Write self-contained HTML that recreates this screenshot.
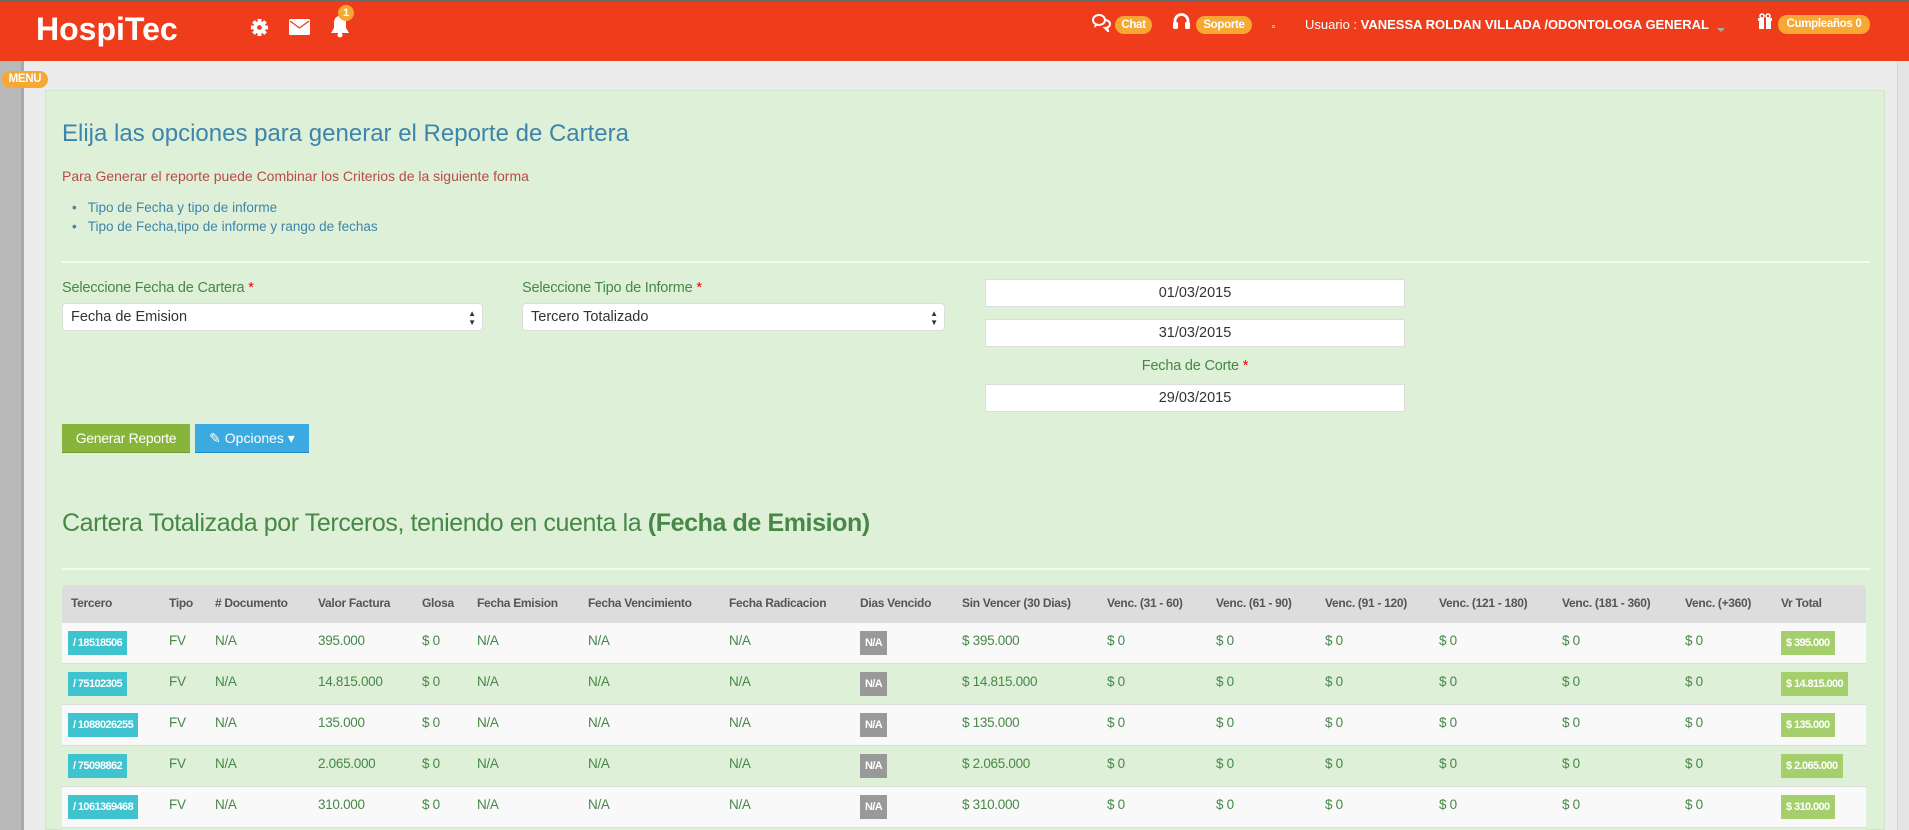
<!DOCTYPE html>
<html style="overflow:hidden;width:1909px;height:830px"><head><meta charset="utf-8"><style>
*{margin:0;padding:0;box-sizing:border-box}
body{width:1909px;height:830px;overflow:hidden;background:#ececec;font-family:"Liberation Sans",Arial,sans-serif;position:relative}
.a{position:absolute;white-space:nowrap}
.hdr{left:0;top:0;width:1909px;height:61px;background:#ef3d1c;border-top:2px solid #6b6b6b}
.pill{background:#f6a833;color:#fff;font-weight:bold;border-radius:9px;font-size:11.5px;height:18px;line-height:18px;padding:0 4px;text-align:center;letter-spacing:-0.3px}
.panel{left:45px;top:90px;width:1840px;height:740px;background:#dff0d8;border:1px solid #d0e6c6}
.lbl{color:#468847;font-size:14.5px;letter-spacing:-0.2px}
.sel{background:#fff;border:1px solid #ddd;border-radius:4px;height:28px;font-size:14.5px;color:#333;line-height:26px;padding-left:8px}
.inp{background:#fff;border:1px solid #ddd;height:28px;width:420px;font-size:14.5px;color:#333;line-height:26px;text-align:center}
.th{top:585px;height:37px;line-height:37px;font-size:12px;font-weight:bold;color:#555;letter-spacing:-0.3px}
.row{left:62px;width:1804px;height:41px;border-top:1px solid #ddd}
.td{font-size:13.5px;color:#468847;letter-spacing:-0.3px}
.bd{color:#fff;font-weight:bold;font-size:11px;height:24px;line-height:24px;padding:0 5px;letter-spacing:-0.6px}
</style></head><body>
<div class="a hdr"></div>
<div class="a" style="left:36px;top:11px;font-size:32px;font-weight:bold;color:#fff;letter-spacing:0px">HospiTec</div>
<svg class="a" style="left:250px;top:18px" width="19" height="19" viewBox="0 0 20 20"><g fill="#fff"><circle cx="10" cy="10" r="6.5"/><rect x="8" y="1" width="4" height="18"/><rect x="1" y="8" width="18" height="4"/><rect x="8" y="1" width="4" height="18" transform="rotate(45 10 10)"/><rect x="8" y="1" width="4" height="18" transform="rotate(-45 10 10)"/></g><circle cx="10" cy="10" r="2.5" fill="#ef3d1c"/></svg>
<svg class="a" style="left:289px;top:19px" width="21" height="16" viewBox="0 0 21 16"><rect width="21" height="16" rx="1.5" fill="#fff"/><path d="M1 2l9.5 7L20 2" stroke="#ef3d1c" stroke-width="1.3" fill="none"/></svg>
<svg class="a" style="left:329px;top:15px" width="22" height="23" viewBox="0 0 22 23"><path d="M11 1c-4 0-6 3-6 7v5l-3 5h18l-3-5V8c0-4-2-7-6-7z" fill="#fff"/><circle cx="11" cy="20" r="2.5" fill="#fff"/></svg>
<div class="a" style="left:338px;top:5px;width:16px;height:16px;border-radius:8px;background:#f6a833;color:#fff;font-size:11px;font-weight:bold;text-align:center;line-height:16px">1</div>
<svg class="a" style="left:1092px;top:13px" width="19" height="19" viewBox="0 0 19 19"><ellipse cx="7" cy="7" rx="6" ry="5" fill="none" stroke="#fff" stroke-width="2"/><path d="M3 11l-1 4 4-3" fill="#fff"/><path d="M13 7a5 4 0 0 1 0 8l3 3-1-4" fill="none" stroke="#fff" stroke-width="2"/></svg>
<div class="a pill" style="left:1115px;top:16px;width:37px">Chat</div>
<svg class="a" style="left:1172px;top:12px" width="19" height="19" viewBox="0 0 19 19"><path d="M3 12V9a6.5 6.5 0 0 1 13 0v3" fill="none" stroke="#fff" stroke-width="2.8"/><rect x="1" y="10" width="5" height="7" rx="1.5" fill="#fff"/><rect x="13" y="10" width="5" height="7" rx="1.5" fill="#fff"/></svg>
<div class="a pill" style="left:1196px;top:16px;width:56px">Soporte</div>
<div class="a" style="left:1272px;top:25px;width:3px;height:3px;border:1px solid #f6a833"></div>
<div class="a" style="left:1305px;top:17px;font-size:13px;color:#fff">Usuario : <b>VANESSA ROLDAN VILLADA /ODONTOLOGA GENERAL</b></div>
<div class="a" style="left:1717px;top:28px;border:4px solid transparent;border-top:4px solid #aaa"></div>
<svg class="a" style="left:1757px;top:13px" width="16" height="16" viewBox="0 0 16 16"><rect x="1" y="5" width="14" height="3" fill="#fff"/><rect x="2" y="8" width="12" height="8" fill="#fff"/><rect x="7" y="5" width="2" height="11" fill="#ef3d1c"/><circle cx="5" cy="3" r="2" fill="none" stroke="#fff" stroke-width="1.5"/><circle cx="11" cy="3" r="2" fill="none" stroke="#fff" stroke-width="1.5"/></svg>
<div class="a pill" style="left:1778px;top:15px;width:92px;height:19px">Cumpleaños 0</div>

<div class="a" style="left:0;top:61px;width:24px;height:769px;background:#b9b9b9;border-right:3px solid #a9a9a9"></div>
<div class="a" style="left:1897px;top:61px;width:12px;height:769px;background:#e4e4e4;border-left:1px solid #d5d5d5"></div>
<div class="a pill" style="left:2px;top:71px;width:46px;height:17px;line-height:17px;font-size:11.5px;padding:0">MENU</div>

<div class="a panel"></div>
<div class="a" style="left:62px;top:120px;font-size:24px;color:#3d85aa">Elija las opciones para generar el Reporte de Cartera</div>
<div class="a" style="left:62px;top:168px;font-size:14px;color:#b94a48">Para Generar el reporte puede Combinar los Criterios de la siguiente forma</div>
<div class="a" style="left:72px;top:198px;font-size:13.5px;color:#3d85aa;line-height:19px">•&nbsp;&nbsp; Tipo de Fecha y tipo de informe<br>•&nbsp;&nbsp; Tipo de Fecha,tipo de informe y rango de fechas</div>
<div class="a" style="left:62px;top:261px;width:1808px;height:2px;background:#f4f9f1"></div>

<div class="a lbl" style="left:62px;top:280px">Seleccione Fecha de Cartera <span style="color:#e00">*</span></div>
<div class="a lbl" style="left:522px;top:280px">Seleccione Tipo de Informe <span style="color:#e00">*</span></div>
<div class="a sel" style="left:62px;top:303px;width:421px">Fecha de Emision<span style="position:absolute;right:6px;top:0;font-size:8px;line-height:9px;padding-top:5px">▲<br>▼</span></div>
<div class="a sel" style="left:522px;top:303px;width:423px">Tercero Totalizado<span style="position:absolute;right:6px;top:0;font-size:8px;line-height:9px;padding-top:5px">▲<br>▼</span></div>
<div class="a inp" style="left:985px;top:279px">01/03/2015</div>
<div class="a inp" style="left:985px;top:319px">31/03/2015</div>
<div class="a lbl" style="left:985px;top:358px;width:420px;text-align:center">Fecha de Corte <span style="color:#e00">*</span></div>
<div class="a inp" style="left:985px;top:384px">29/03/2015</div>

<div class="a" style="left:62px;top:424px;width:128px;height:29px;background:#87b43a;color:#fff;font-size:14px;line-height:29px;text-align:center;border-bottom:1px solid #6d9a2a;letter-spacing:-0.3px">Generar Reporte</div>
<div class="a" style="left:195px;top:424px;width:114px;height:29px;background:#3aaae1;color:#fff;font-size:14px;line-height:29px;text-align:center;border-bottom:1px solid #1f8fc8">✎ Opciones ▾</div>

<div class="a" style="left:62px;top:509px;font-size:25px;color:#468847;letter-spacing:-0.4px">Cartera Totalizada por Terceros, teniendo en cuenta la <b>(Fecha de Emision)</b></div>
<div class="a" style="left:62px;top:568px;width:1808px;height:2px;background:#f4f9f1"></div>

<div class="a" style="left:62px;top:585px;width:1804px;height:37px;background:#dddddd;border-radius:4px 4px 0 0"></div>
<div class="a th" style="left:71px">Tercero</div>
<div class="a th" style="left:169px">Tipo</div>
<div class="a th" style="left:215px"># Documento</div>
<div class="a th" style="left:318px">Valor Factura</div>
<div class="a th" style="left:422px">Glosa</div>
<div class="a th" style="left:477px">Fecha Emision</div>
<div class="a th" style="left:588px">Fecha Vencimiento</div>
<div class="a th" style="left:729px">Fecha Radicacion</div>
<div class="a th" style="left:860px">Dias Vencido</div>
<div class="a th" style="left:962px">Sin Vencer (30 Dias)</div>
<div class="a th" style="left:1107px">Venc. (31 - 60)</div>
<div class="a th" style="left:1216px">Venc. (61 - 90)</div>
<div class="a th" style="left:1325px">Venc. (91 - 120)</div>
<div class="a th" style="left:1439px">Venc. (121 - 180)</div>
<div class="a th" style="left:1562px">Venc. (181 - 360)</div>
<div class="a th" style="left:1685px">Venc. (+360)</div>
<div class="a th" style="left:1781px">Vr Total</div>

<div class="a row" style="top:622px;background:#f9f9f9"></div>
<div class="a row" style="top:663px;background:#dff0d8"></div>
<div class="a row" style="top:704px;background:#f9f9f9"></div>
<div class="a row" style="top:745px;background:#dff0d8"></div>
<div class="a row" style="top:786px;background:#f9f9f9"></div>
<div class="a" style="left:62px;top:827px;width:1804px;height:3px;border-top:1px solid #ddd;background:#dff0d8"></div>

<div class="a bd" style="left:68px;top:631px;background:#3ec3cf">/ 18518506</div>
<div class="a bd" style="left:68px;top:672px;background:#3ec3cf">/ 75102305</div>
<div class="a bd" style="left:68px;top:713px;background:#3ec3cf">/ 1088026255</div>
<div class="a bd" style="left:68px;top:754px;background:#3ec3cf">/ 75098862</div>
<div class="a bd" style="left:68px;top:795px;background:#3ec3cf">/ 1061369468</div>

<div class="a td" style="left:169px;top:620px;line-height:41px">FV<br>FV<br>FV<br>FV<br>FV</div>
<div class="a td" style="left:215px;top:620px;line-height:41px">N/A<br>N/A<br>N/A<br>N/A<br>N/A</div>
<div class="a td" style="left:318px;top:620px;line-height:41px">395.000<br>14.815.000<br>135.000<br>2.065.000<br>310.000</div>
<div class="a td" style="left:422px;top:620px;line-height:41px">$ 0<br>$ 0<br>$ 0<br>$ 0<br>$ 0</div>
<div class="a td" style="left:477px;top:620px;line-height:41px">N/A<br>N/A<br>N/A<br>N/A<br>N/A</div>
<div class="a td" style="left:588px;top:620px;line-height:41px">N/A<br>N/A<br>N/A<br>N/A<br>N/A</div>
<div class="a td" style="left:729px;top:620px;line-height:41px">N/A<br>N/A<br>N/A<br>N/A<br>N/A</div>
<div class="a bd" style="left:860px;top:631px;background:#999">N/A</div>
<div class="a bd" style="left:860px;top:672px;background:#999">N/A</div>
<div class="a bd" style="left:860px;top:713px;background:#999">N/A</div>
<div class="a bd" style="left:860px;top:754px;background:#999">N/A</div>
<div class="a bd" style="left:860px;top:795px;background:#999">N/A</div>
<div class="a td" style="left:962px;top:620px;line-height:41px">$ 395.000<br>$ 14.815.000<br>$ 135.000<br>$ 2.065.000<br>$ 310.000</div>
<div class="a td" style="left:1107px;top:620px;line-height:41px">$ 0<br>$ 0<br>$ 0<br>$ 0<br>$ 0</div>
<div class="a td" style="left:1216px;top:620px;line-height:41px">$ 0<br>$ 0<br>$ 0<br>$ 0<br>$ 0</div>
<div class="a td" style="left:1325px;top:620px;line-height:41px">$ 0<br>$ 0<br>$ 0<br>$ 0<br>$ 0</div>
<div class="a td" style="left:1439px;top:620px;line-height:41px">$ 0<br>$ 0<br>$ 0<br>$ 0<br>$ 0</div>
<div class="a td" style="left:1562px;top:620px;line-height:41px">$ 0<br>$ 0<br>$ 0<br>$ 0<br>$ 0</div>
<div class="a td" style="left:1685px;top:620px;line-height:41px">$ 0<br>$ 0<br>$ 0<br>$ 0<br>$ 0</div>
<div class="a bd" style="left:1781px;top:631px;background:#a5cf6d">$ 395.000</div>
<div class="a bd" style="left:1781px;top:672px;background:#a5cf6d">$ 14.815.000</div>
<div class="a bd" style="left:1781px;top:713px;background:#a5cf6d">$ 135.000</div>
<div class="a bd" style="left:1781px;top:754px;background:#a5cf6d">$ 2.065.000</div>
<div class="a bd" style="left:1781px;top:795px;background:#a5cf6d">$ 310.000</div>
</body></html>
